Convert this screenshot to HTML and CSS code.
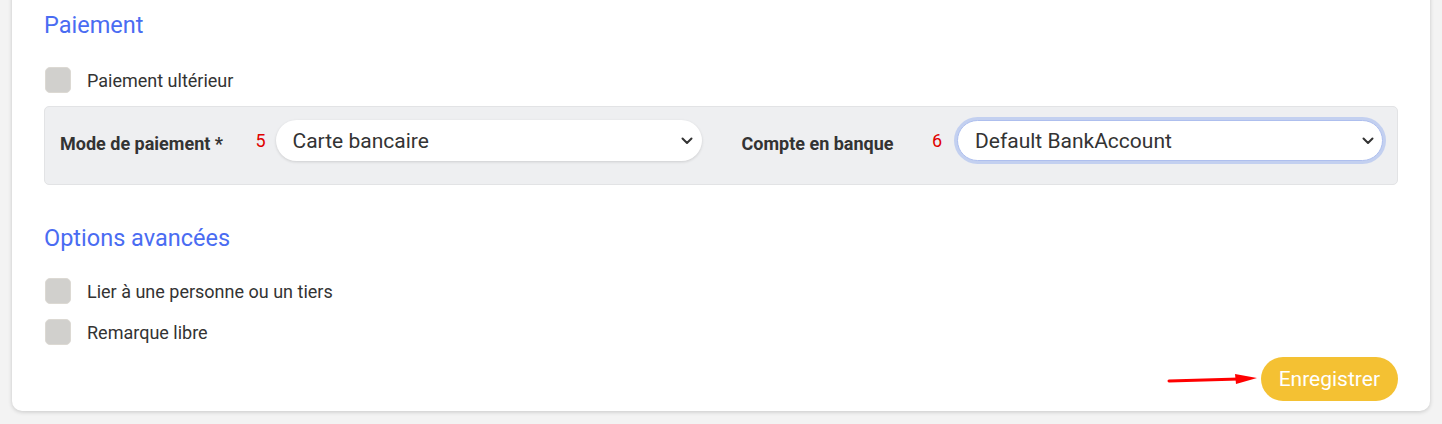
FILE: index.html
```html
<!DOCTYPE html>
<html lang="fr">
<head>
  <meta charset="UTF-8">
  <title>Paiement</title>
  <link rel="stylesheet" href="styles.css">
</head>
<body>
  <div class="card">
    <h2 class="section-title">Paiement</h2>
    <label class="check-row first">
      <input type="checkbox"><span>Paiement ultérieur</span>
    </label>

    <div class="pay-panel">
      <div class="field">
        <span class="field-label">Mode de paiement *</span>
        <span class="step">5</span>
        <div class="select-wrap">
          <select class="pill-select">
            <option>Carte bancaire</option>
          </select>
          <svg class="chevron" width="12" height="8" viewBox="0 0 12 8">
            <path d="M1.5 1.5 L6 6 L10.5 1.5" fill="none" stroke="#333" stroke-width="2" stroke-linecap="round" stroke-linejoin="round"/>
          </svg>
        </div>
      </div>
      <div class="field">
        <span class="field-label">Compte en banque</span>
        <span class="step step-wide">6</span>
        <div class="select-wrap">
          <select class="pill-select focused">
            <option>Default BankAccount</option>
          </select>
          <svg class="chevron" width="12" height="8" viewBox="0 0 12 8">
            <path d="M1.5 1.5 L6 6 L10.5 1.5" fill="none" stroke="#333" stroke-width="2" stroke-linecap="round" stroke-linejoin="round"/>
          </svg>
        </div>
      </div>
    </div>

    <h2 class="section-title options">Options avancées</h2>
    <label class="check-row">
      <input type="checkbox"><span>Lier à une personne ou un tiers</span>
    </label>
    <label class="check-row second">
      <input type="checkbox"><span>Remarque libre</span>
    </label>

    <div class="action-row">
      <svg class="hint-arrow" width="90" height="12" viewBox="0 0 90 12">
        <line x1="2" y1="8" x2="72" y2="6" stroke="#ff0000" stroke-width="3" stroke-linecap="round"/>
        <polygon points="68,1 90,5 69,11" fill="#ff0000"/>
      </svg>
      <button class="save-btn">Enregistrer</button>
    </div>
  </div>
</body>
</html>
```

FILE: styles.css
```css
/* Base */
body {
  margin: 0;
  padding: 0 12px 13px;
  background-color: #f3f3f3;
  font-family: Roboto, 'Liberation Sans', sans-serif;
  color: #333;
  overflow: hidden;
}
.card {
  margin-top: -20px;
  padding: 31px 32px 10px;
  background: #fff;
  border-radius: 10px;
  box-shadow: 0 1px 4px rgba(0,0,0,0.18);
}
/* Section headings */
.section-title {
  margin: 0;
  font-size: 23.5px;
  line-height: 28px;
  font-weight: 400;
  color: #4a6cf2;
}
.section-title.options {
  margin-top: 39px;
}
/* Checkboxes */
.check-row {
  display: flex;
  align-items: center;
  gap: 16px;
  margin-top: 26px;
  margin-left: 1px;
  font-size: 18px;
  color: #333;
}
.check-row.first { margin-top: 28px; }
.check-row.second { margin-top: 15px; }
.check-row input {
  appearance: none;
  margin: 0;
  width: 26px;
  height: 26px;
  border: 1px solid #dcd9d3;
  border-radius: 5px;
  background: #d1d0cd;
}
/* Payment panel */
.pay-panel {
  display: grid;
  grid-template-columns: 1fr 1fr;
  gap: 40px;
  margin-top: 13px;
  padding: 13px 14px 23px 15px;
  background: #eeeff1;
  border: 1px solid #e2e3e5;
  border-radius: 5px;
}
.field {
  display: flex;
  align-items: center;
}
.field-label {
  flex: 1;
  padding-top: 6px;
  font-size: 18px;
  font-weight: 700;
  color: #333;
}
.step {
  margin-right: 10px;
  font-size: 18px;
  color: #e00000;
}
.step-wide { margin-right: 15px; }
.select-wrap {
  position: relative;
  display: flex;
}
.chevron {
  position: absolute;
  right: 9px;
  top: 17px;
  pointer-events: none;
}
.pill-select {
  appearance: none;
  width: 426px;
  height: 41px;
  padding: 0 30px 0 17px;
  border: none;
  border-radius: 21px;
  background: #fff;
  font-family: Roboto, 'Liberation Sans', sans-serif;
  font-size: 21px;
  color: #333;
  box-shadow: 0 1px 3px rgba(0,0,0,0.14);
  outline: none;
}
.pill-select.focused {
  box-shadow: 0 0 0 3px #c3d0f0;
  border: 1px solid #aebfee;
  padding-left: 17px;
}
/* Footer action */
.action-row {
  display: flex;
  justify-content: flex-end;
  align-items: center;
  gap: 4px;
  margin-top: 12px;
}
.save-btn {
  height: 44px;
  padding: 0 18px;
  border: none;
  border-radius: 22px;
  background: #f4c133;
  color: #fff;
  font-family: Roboto, 'Liberation Sans', sans-serif;
  font-size: 21px;
}
```
